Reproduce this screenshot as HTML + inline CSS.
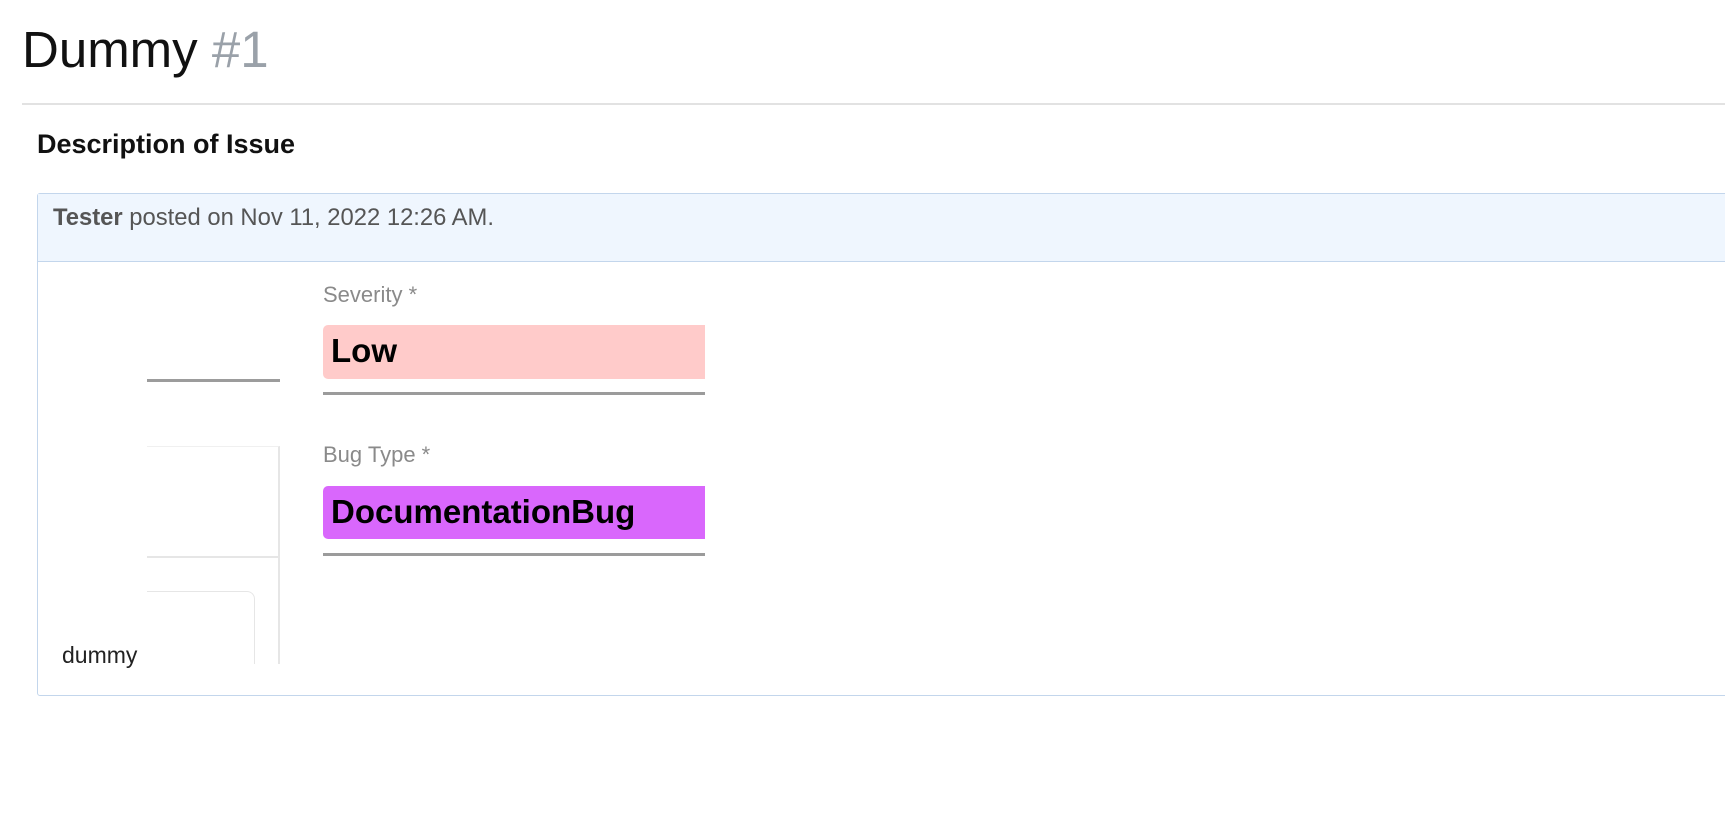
<!DOCTYPE html>
<html><head><meta charset="utf-8"><style>
*{margin:0;padding:0;box-sizing:border-box}
html,body{width:1725px;height:840px;background:#fff;overflow:hidden;font-family:"Liberation Sans",Arial,sans-serif}
.abs{position:absolute}
</style></head><body>
<div class="abs" style="left:22px;top:20px;font-size:51px;line-height:60px;color:#111;white-space:nowrap">Dummy <span style="color:#9aa1a9">#1</span></div>
<div class="abs" style="left:22px;top:103px;width:1703px;height:2px;background:#e2e2e2"></div>
<div class="abs" style="left:37px;top:127px;font-size:27px;line-height:34px;color:#111;white-space:nowrap;font-weight:bold">Description of Issue</div>

<div class="abs" style="left:37px;top:193px;width:1700px;height:503px;border:1px solid #c3d6ec;border-radius:3px;background:#fff"></div>
<div class="abs" style="left:38px;top:194px;width:1690px;height:68px;background:#eff6fe;border-bottom:1px solid #c3d6ec"></div>
<div class="abs" style="left:53px;top:204px;font-size:23.8px;line-height:28px;color:#555;white-space:nowrap"><b style="color:#555">Tester</b> posted on Nov 11, 2022 12:26 AM.</div>

<div class="abs" style="left:147px;top:379px;width:133px;height:3px;background:#9c9c9c"></div>
<div class="abs" style="left:147px;top:446px;width:133px;height:218px;border-top:1px solid #f0f0f0;border-right:2px solid #e6e6e6"></div>
<div class="abs" style="left:147px;top:556px;width:133px;height:2px;background:#e6e6e6"></div>
<div class="abs" style="left:147px;top:591px;width:108px;height:73px;border:1px solid #e6e6e6;border-left:none;border-bottom:none;border-radius:0 8px 0 0"></div>

<div class="abs" style="left:323px;top:281px;font-size:22px;line-height:28px;color:#8a8a8a;white-space:nowrap">Severity *</div>
<div class="abs" style="left:323px;top:325px;width:382px;height:54px;background:#ffcbca;border-radius:5px 0 0 5px"></div>
<div class="abs" style="left:331px;top:331px;font-size:33px;line-height:40px;color:#000;font-weight:bold">Low</div>
<div class="abs" style="left:323px;top:392px;width:382px;height:3px;background:#9b9b9b"></div>

<div class="abs" style="left:323px;top:441px;font-size:22px;line-height:28px;color:#8a8a8a;white-space:nowrap">Bug Type *</div>
<div class="abs" style="left:323px;top:486px;width:382px;height:53px;background:#d967fc;border-radius:5px 0 0 5px"></div>
<div class="abs" style="left:331px;top:492px;font-size:33px;line-height:40px;color:#000;white-space:nowrap;font-weight:bold">DocumentationBug</div>
<div class="abs" style="left:323px;top:553px;width:382px;height:3px;background:#9b9b9b"></div>

<div class="abs" style="left:62px;top:641px;font-size:23px;line-height:28px;color:#222">dummy</div>
</body></html>
